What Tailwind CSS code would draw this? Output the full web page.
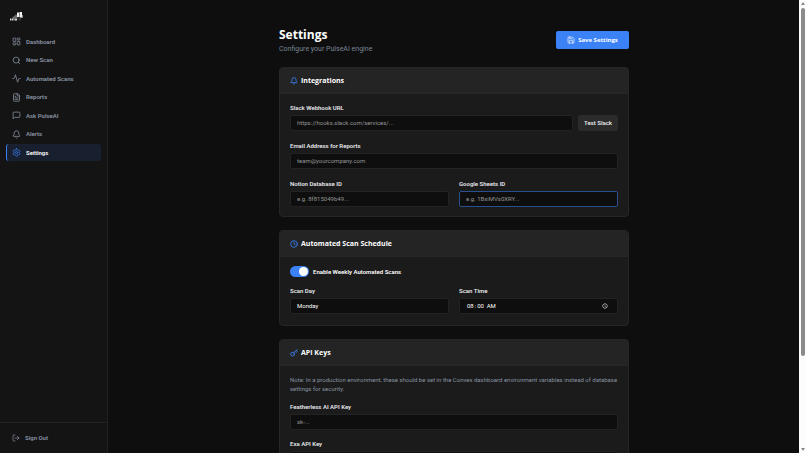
<!DOCTYPE html>
<html lang="en">
<head>
<meta charset="utf-8">
<meta name="viewport" content="width=device-width, initial-scale=1">
<title>PulseAI Settings</title>
<script src="https://cdn.jsdelivr.net/npm/@tailwindcss/browser@4"></script>
</head>
<body class="flex h-screen overflow-hidden bg-[#0e0e0e] font-['Roboto','Noto_Sans',sans-serif] text-[6px] leading-[8px] text-white scheme-dark">
<svg class="hidden" aria-hidden="true">
  <symbol id="bell" viewBox="0 0 24 24"><path d="M10.268 21a2 2 0 0 0 3.464 0"/><path d="M3.262 15.326A1 1 0 0 0 4 17h16a1 1 0 0 0 .74-1.673C19.41 13.956 18 12.499 18 8A6 6 0 0 0 6 8c0 4.499-1.411 5.956-2.738 7.326"/></symbol>
</svg>

<aside class="flex w-[108px] shrink-0 flex-col border-r border-[#222] bg-[#141414]">
  <div class="px-[10px] pt-3">
    <svg class="h-[10px] w-[14px]" viewBox="0 0 28 20" role="img" aria-label="Pulse">
      <path d="M4 12l3-3 2-1 2-3 2 1 2-3v9z" fill="#6a6a6a"/>
      <path d="M14 1h4v9h-4zM19 0h5v11h-5z" fill="#f4f4f4"/>
      <path d="M24 6h2v6h-2z" fill="#888"/>
      <path d="M0 13h3v4H0zM4 13h2v4H4zM7 12h2v5H7zM10 13h4v4h-4z" fill="#d8d8d8"/>
      <path d="M15 13h2v2h-2zM19 12h2v5h-2z" fill="#555"/>
    </svg>
  </div>
  <nav class="mt-[11px] flex h-[128px] flex-col justify-between px-[6px] font-semibold text-[#8b95a5]">
    <a href="#" class="flex h-[17px] items-center gap-[5px] rounded-[3px] border-l border-transparent pl-[5px]"><svg class="size-[9px] fill-none stroke-current stroke-2" viewBox="0 0 24 24"><rect width="7" height="9" x="3" y="3" rx="1"/><rect width="7" height="5" x="14" y="3" rx="1"/><rect width="7" height="9" x="14" y="12" rx="1"/><rect width="7" height="5" x="3" y="16" rx="1"/></svg>Dashboard</a>
    <a href="#" class="flex h-[17px] items-center gap-[5px] rounded-[3px] border-l border-transparent pl-[5px]"><svg class="size-[9px] fill-none stroke-current stroke-2" viewBox="0 0 24 24" stroke-linecap="round"><circle cx="11" cy="11" r="8"/><path d="m21 21-4.3-4.3"/></svg>New Scan</a>
    <a href="#" class="flex h-[17px] items-center gap-[5px] rounded-[3px] border-l border-transparent pl-[5px]"><svg class="size-[9px] fill-none stroke-current stroke-2" viewBox="0 0 24 24" stroke-linecap="round" stroke-linejoin="round"><path d="M22 12h-2.480a2 2 0 0 0-1.930 1.460l-2.350 8.360a.25.25 0 0 1-.48 0L9.240 2.180a.25.25 0 0 0-.48 0l-2.350 8.360A2 2 0 0 1 4.490 12H2"/></svg>Automated Scans</a>
    <a href="#" class="flex h-[17px] items-center gap-[5px] rounded-[3px] border-l border-transparent pl-[5px]"><svg class="size-[9px] fill-none stroke-current stroke-2" viewBox="0 0 24 24" stroke-linecap="round" stroke-linejoin="round"><path d="M15 2H6a2 2 0 0 0-2 2v16a2 2 0 0 0 2 2h12a2 2 0 0 0 2-2V7Z"/><path d="M14 2v4a2 2 0 0 0 2 2h4M10 9H8M16 13H8M16 17H8"/></svg>Reports</a>
    <a href="#" class="flex h-[17px] items-center gap-[5px] rounded-[3px] border-l border-transparent pl-[5px]"><svg class="size-[9px] fill-none stroke-current stroke-2" viewBox="0 0 24 24" stroke-linecap="round" stroke-linejoin="round"><path d="M21 15a2 2 0 0 1-2 2H7l-4 4V5a2 2 0 0 1 2-2h14a2 2 0 0 1 2 2z"/></svg>Ask PulseAI</a>
    <a href="#" class="flex h-[17px] items-center gap-[5px] rounded-[3px] border-l border-transparent pl-[5px]"><svg class="size-[9px] fill-none stroke-current stroke-2" stroke-linecap="round" stroke-linejoin="round"><use href="#bell"/></svg>Alerts</a>
    <a href="#" aria-current="page" class="flex h-[17px] items-center gap-[5px] rounded-[3px] border-l border-[#3b82f6] bg-[#182030] pl-[5px] text-white"><svg class="size-[9px] fill-none stroke-[#3b82f6] stroke-2" viewBox="0 0 24 24" stroke-linecap="round" stroke-linejoin="round"><path d="M12.220 2h-.44a2 2 0 0 0-2 2v.18a2 2 0 0 1-1 1.730l-.43.25a2 2 0 0 1-2 0l-.15-.08a2 2 0 0 0-2.730.73l-.22.38a2 2 0 0 0 .73 2.730l.15.1a2 2 0 0 1 1 1.720v.51a2 2 0 0 1-1 1.740l-.15.09a2 2 0 0 0-.73 2.730l.22.38a2 2 0 0 0 2.730.73l.15-.08a2 2 0 0 1 2 0l.43.25a2 2 0 0 1 1 1.730V20a2 2 0 0 0 2 2h.44a2 2 0 0 0 2-2v-.18a2 2 0 0 1 1-1.730l.43-.25a2 2 0 0 1 2 0l.15.08a2 2 0 0 0 2.730-.73l.22-.39a2 2 0 0 0-.73-2.730l-.15-.08a2 2 0 0 1-1-1.740v-.5a2 2 0 0 1 1-1.740l.15-.09a2 2 0 0 0 .73-2.730l-.22-.38a2 2 0 0 0-2.730-.73l-.15.08a2 2 0 0 1-2 0l-.43-.25a2 2 0 0 1-1-1.730V4a2 2 0 0 0-2-2z"/><circle cx="12" cy="12" r="3"/></svg>Settings</a>
  </nav>
  <div class="mt-auto flex h-[31px] items-center border-t border-[#222] px-3">
    <button type="button" class="flex items-center gap-[5px] font-semibold text-[#8b95a5]"><svg class="size-2 fill-none stroke-current stroke-2" viewBox="0 0 24 24" stroke-linecap="round" stroke-linejoin="round"><path d="M9 21H5a2 2 0 0 1-2-2V5a2 2 0 0 1 2-2h4M16 17l5-5-5-5M21 12H9"/></svg>Sign Out</button>
  </div>
</aside>

<main class="min-w-0 flex-1 overflow-hidden pt-[26px] pl-px">
  <div class="mx-auto flex max-w-[350px] flex-col gap-[13px]">
    <header class="flex h-[28px] items-center justify-between">
      <div>
        <h1 class="font-['Open_Sans',sans-serif] text-[12px] leading-[18px] font-bold">Settings</h1>
        <p class="text-[7px] leading-[10px] text-[#7a8595]">Configure your PulseAI engine</p>
      </div>
      <button type="button" class="flex h-[18px] w-[73px] items-center justify-center gap-[3px] rounded-[2px] bg-[#3b82f6] font-['Open_Sans',sans-serif] font-bold"><svg class="size-2 fill-none stroke-current stroke-2" viewBox="0 0 24 24" stroke-linecap="round" stroke-linejoin="round"><path d="M15.200 3a2 2 0 0 1 1.400.6l3.800 3.800a2 2 0 0 1 .6 1.400V19a2 2 0 0 1-2 2H5a2 2 0 0 1-2-2V5a2 2 0 0 1 2-2z"/><path d="M17 21v-7a1 1 0 0 0-1-1H8a1 1 0 0 0-1 1v7M7 3v4a1 1 0 0 0 1 1h7"/></svg>Save Settings</button>
    </header>

    <section class="rounded-[4px] border border-[#262626] bg-[#1b1b1b]">
      <h2 class="flex h-[26px] items-center gap-[3px] rounded-t-[3px] border-b border-[#272727] bg-[#242424] px-[10px] font-['Open_Sans',sans-serif] text-[7px] font-bold"><svg class="size-2 fill-none stroke-[#3b82f6] stroke-[2.5]" stroke-linecap="round" stroke-linejoin="round"><use href="#bell"/></svg>Integrations</h2>
      <div class="flex flex-col gap-[11px] px-[10px] pt-[10px] pb-[9px]">
        <div class="flex flex-col gap-[3px]">
          <label for="slack" class="font-semibold text-[#e5e7eb]">Slack Webhook URL</label>
          <div class="flex gap-[5px]">
            <input id="slack" type="url" placeholder="https://hooks.slack.com/services/..." class="h-4 min-w-0 flex-1 rounded-[2px] border border-[#232323] bg-[#0e0e0e] px-[6px] pb-[2px] placeholder:text-[#959595]">
            <button type="button" class="h-4 w-10 rounded-[2px] bg-[#2b2b2b] font-semibold text-[#e5e7eb]">Test Slack</button>
          </div>
        </div>
        <div class="flex flex-col gap-[3px]">
          <label for="email" class="font-semibold text-[#e5e7eb]">Email Address for Reports</label>
          <input id="email" type="email" placeholder="team@yourcompany.com" class="h-4 w-full rounded-[2px] border border-[#232323] bg-[#0e0e0e] px-[6px] pb-[2px] placeholder:text-[#959595]">
        </div>
        <div class="grid grid-cols-2 gap-[10px]">
          <div class="flex flex-col gap-[3px]">
            <label for="notion" class="font-semibold text-[#e5e7eb]">Notion Database ID</label>
            <input id="notion" type="text" placeholder="e.g. 8f815049b49..." class="h-4 w-full rounded-[2px] border border-[#232323] bg-[#0e0e0e] px-[6px] pb-[2px] placeholder:text-[#959595]">
          </div>
          <div class="flex flex-col gap-[3px]">
            <label for="sheets" class="font-semibold text-[#e5e7eb]">Google Sheets ID</label>
            <input id="sheets" type="text" placeholder="e.g. 1BxiMVs0XRY..." class="h-4 w-full rounded-[2px] border border-[#284f8f] bg-[#0e0e0e] px-[6px] pb-[2px] placeholder:text-[#959595]">
          </div>
        </div>
      </div>
    </section>

    <section class="rounded-[4px] border border-[#262626] bg-[#1b1b1b]">
      <h2 class="flex h-[26px] items-center gap-[3px] rounded-t-[3px] border-b border-[#272727] bg-[#242424] px-[10px] font-['Open_Sans',sans-serif] text-[7px] font-bold"><svg class="size-2 fill-none stroke-[#3b82f6] stroke-[2.5]" viewBox="0 0 24 24" stroke-linecap="round" stroke-linejoin="round"><circle cx="12" cy="12" r="10"/><path d="M12 6v6l4 2"/></svg>Automated Scan Schedule</h2>
      <div class="flex flex-col gap-[10px] px-[10px] pt-[9px] pb-[11px]">
        <label class="flex items-center gap-1 font-semibold">
          <input type="checkbox" role="switch" checked class="h-[11px] w-[19px] appearance-none rounded-full bg-[#3b82f6] p-px before:block before:size-[9px] before:rounded-full before:bg-white checked:before:ml-2">
          Enable Weekly Automated Scans
        </label>
        <div class="grid grid-cols-2 gap-[10px]">
          <div class="flex flex-col gap-[3px]">
            <label for="day" class="font-semibold text-[#e5e7eb]">Scan Day</label>
            <select id="day" class="h-4 w-full appearance-none rounded-[2px] border border-[#232323] bg-[#0e0e0e] px-[6px]"><option>Monday</option><option>Tuesday</option><option>Wednesday</option><option>Thursday</option><option>Friday</option></select>
          </div>
          <div class="flex flex-col gap-[3px]">
            <label for="time" class="font-semibold text-[#e5e7eb]">Scan Time</label>
            <input id="time" type="time" value="08:00" class="h-4 w-full rounded-[2px] border border-[#232323] bg-[#0e0e0e] px-[6px]">
          </div>
        </div>
      </div>
    </section>

    <section class="rounded-[4px] border border-[#262626] bg-[#1b1b1b]">
      <h2 class="flex h-[26px] items-center gap-[3px] rounded-t-[3px] border-b border-[#272727] bg-[#242424] px-[10px] font-['Open_Sans',sans-serif] text-[7px] font-bold"><svg class="size-2 fill-none stroke-[#3b82f6] stroke-[2.5]" viewBox="0 0 24 24" stroke-linecap="round" stroke-linejoin="round"><path d="m15.500 7.500 2.300 2.300a1 1 0 0 0 1.400 0l2.100-2.100a1 1 0 0 0 0-1.400L19 4M21 2l-9.600 9.600"/><circle cx="7.500" cy="15.500" r="5.500"/></svg>API Keys</h2>
      <div class="flex flex-col gap-[10px] px-[10px] pt-[9px] pb-[11px]">
        <p class="leading-[9px] text-[#8791a0]">Note: In a production environment, these should be set in the Convex dashboard environment variables instead of database settings for security.</p>
        <div class="flex flex-col gap-[3px]">
          <label for="featherless" class="font-semibold text-[#e5e7eb]">Featherless AI API Key</label>
          <input id="featherless" type="password" placeholder="sk-..." class="h-4 w-full rounded-[2px] border border-[#232323] bg-[#0e0e0e] px-[6px] pb-[2px] placeholder:text-[#959595]">
        </div>
        <div class="flex flex-col gap-[3px]">
          <label for="exa" class="font-semibold text-[#e5e7eb]">Exa API Key</label>
          <input id="exa" type="password" class="h-4 w-full rounded-[2px] border border-[#232323] bg-[#0e0e0e] px-[6px] pb-[2px]">
        </div>
      </div>
    </section>
  </div>
</main>

<div aria-hidden="true" class="flex w-[7px] shrink-0 flex-col items-center bg-[#fcfcfc] py-[2px]">
  <svg class="h-[3px] w-1 fill-[#888]" viewBox="0 0 4 3"><path d="M2 0l2 3H0z"/></svg>
  <div class="mt-[3px] flex w-1 flex-1 flex-col"><div class="h-[79%] rounded-full bg-[#8b8b8b]"></div></div>
  <svg class="h-[3px] w-1 fill-[#888]" viewBox="0 0 4 3"><path d="M0 0h4L2 3z"/></svg>
</div>
</body>
</html>
